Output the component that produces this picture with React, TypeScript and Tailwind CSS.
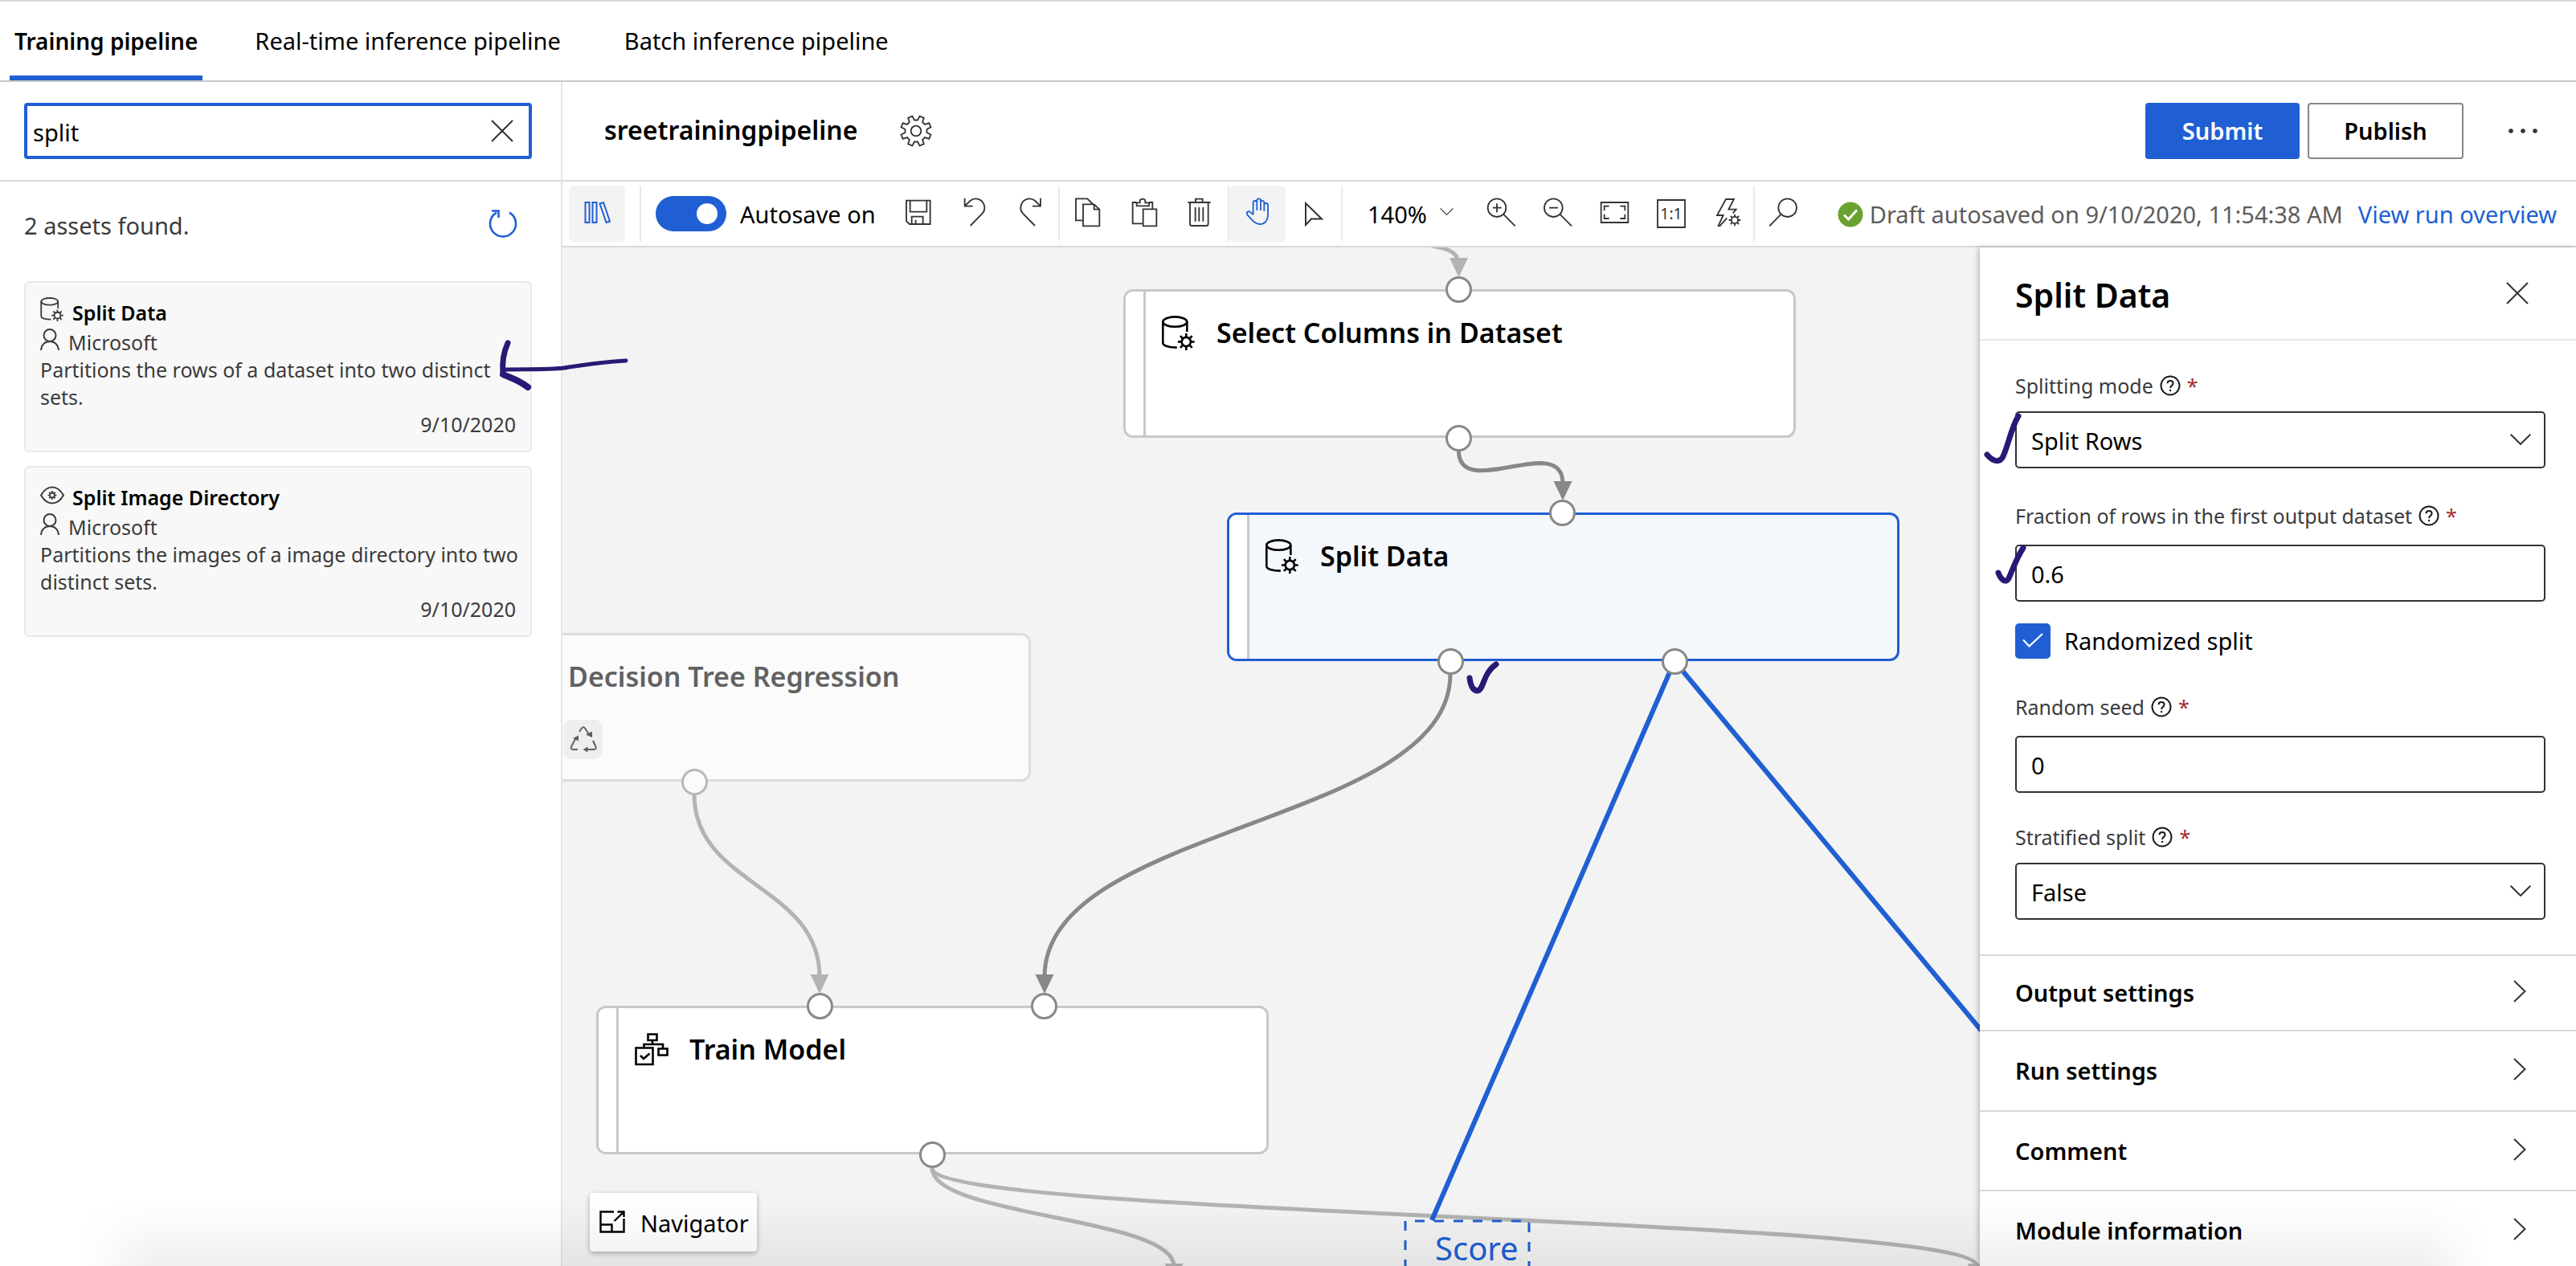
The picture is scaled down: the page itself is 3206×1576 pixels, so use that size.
import React, { useState } from "react";

const INK = "#281a74";
const BLUE = "#205fd3";

function gearPath(cx: number, cy: number, inner: number, outer: number) {
  const pts: string[] = [];
  for (let k = 0; k < 8; k++) {
    const steps: [number, number][] = [
      [8.5, inner],
      [14, outer],
      [31, outer],
      [36.5, inner],
    ];
    for (const [deg, r] of steps) {
      const a = ((k * 45 + deg) * Math.PI) / 180;
      pts.push(`${(cx + r * Math.sin(a)).toFixed(1)} ${(cy - r * Math.cos(a)).toFixed(1)}`);
    }
  }
  return `M${pts.join("L")}Z`;
}

function spokes(cx: number, cy: number, from: number, to: number) {
  let d = "";
  for (let k = 0; k < 8; k++) {
    const a = (k * Math.PI) / 4;
    d += `M${(cx + from * Math.cos(a)).toFixed(1)} ${(cy + from * Math.sin(a)).toFixed(1)}L${(cx + to * Math.cos(a)).toFixed(1)} ${(cy + to * Math.sin(a)).toFixed(1)}`;
  }
  return d;
}

function Ico({ vb, children, className = "" }: { vb: string; children: React.ReactNode; className?: string }) {
  return (
    <svg aria-hidden="true" viewBox={vb} width="44" height="44" fill="none" stroke="currentColor" strokeWidth="5.5" className={className}>
      {children}
    </svg>
  );
}

function ToolButton({ label, active, children }: { label: string; active?: boolean; children: React.ReactNode }) {
  return (
    <button
      aria-label={label}
      className={
        active
          ? "flex h-[70px] w-[70px] shrink-0 items-start justify-center rounded-md bg-[#f3f3f3] pt-[14px] text-[#205fd3]"
          : "flex h-[70px] w-[70px] shrink-0 items-start justify-center pt-[14px] text-[#333333]"
      }
    >
      {children}
    </button>
  );
}

function Separator() {
  return <div className="-ml-px h-[70px] w-0.5 shrink-0 rounded-r bg-[#e9e9e9]" />;
}

function DatabaseGear({ className }: { className: string }) {
  return (
    <svg aria-hidden="true" viewBox="0 0 42 43" fill="none" stroke="currentColor" strokeWidth="2.6" className={className}>
      <ellipse cx="16.3" cy="7.6" rx="15" ry="6.2" />
      <path d="M1.3 7.6V34c0 3.200 7 5.600 17.500 5.600M31.300 7.600V20" />
      <circle cx="30.300" cy="32.500" r="5.600" />
      <path d={spokes(30.3, 32.5, 6, 10.4)} />
    </svg>
  );
}

function EyeGear({ className }: { className: string }) {
  return (
    <svg aria-hidden="true" viewBox="0 0 30 30" fill="none" stroke="currentColor" strokeWidth="2" className={className}>
      <path d="M1 16.500C5 9.500 9.500 6.500 15 6.500s10 3 14 10c-4 7-8.500 10-14 10s-10-3-14-10Z" />
      <circle cx="15" cy="16.500" r="3" strokeWidth="1.800" />
      <path d={spokes(15, 16.5, 3.2, 5.4)} strokeWidth="1.600" />
    </svg>
  );
}

function PersonIcon() {
  return (
    <svg aria-hidden="true" viewBox="0 0 24 27" fill="none" stroke="currentColor" strokeWidth="2" className="h-[27px] w-6">
      <ellipse cx="12" cy="8.500" rx="7.500" ry="7.500" />
      <path d="M1 27C1.500 20 6 16 12 16s10.500 4 11 11" />
    </svg>
  );
}

function ChevronDown({ className, width = "2" }: { className: string; width?: string }) {
  return (
    <svg aria-hidden="true" viewBox="0 0 26 14" fill="none" stroke="#333333" strokeWidth={width} className={className}>
      <path d="M0.700 0.700L13 13L25.300 0.700" />
    </svg>
  );
}

function CloseIcon({ className }: { className: string }) {
  return (
    <svg aria-hidden="true" viewBox="0 0 28 28" fill="none" stroke="#333333" strokeWidth="2" className={className}>
      <path d="M1 1L27 27M27 1L1 27" />
    </svg>
  );
}

function Ink({ vb, className, children }: { vb: string; className: string; children: React.ReactNode }) {
  return (
    <svg aria-hidden="true" viewBox={vb} fill="none" stroke={INK} strokeWidth="7" strokeLinecap="round" strokeLinejoin="round" className={className}>
      {children}
    </svg>
  );
}

function AssetCard({ title, text, icon, children }: { title: string; text: string; icon: React.ReactNode; children?: React.ReactNode }) {
  return (
    <article className="relative rounded-md border-2 border-[#e9e9e9] bg-[#f8f8f8] px-[18px] pt-[18px] pb-4 text-[25px] leading-[34px] text-[#3b3b3b]">
      <div className="flex h-[39px] items-start gap-2.5">
        {icon}
        <h3 className="mt-0.5 font-semibold text-black">{title}</h3>
      </div>
      <div className="flex h-[34px] items-start gap-[11px]">
        <PersonIcon />
        <span>Microsoft</span>
      </div>
      <p className="-mr-3">{text}</p>
      <p className="text-right">9/10/2020</p>
      {children}
    </article>
  );
}

function Port({ className, faded }: { className: string; faded?: boolean }) {
  return (
    <span
      className={
        (faded ? "border-[#b8b8b7] bg-[#fbfbfb] " : "border-[#8a8886] bg-white ") +
        "absolute h-[33px] w-[33px] rounded-full border-[3px] " +
        className
      }
    />
  );
}

function GraphNode({ title, selected, className, icon, children }: { title: string; selected?: boolean; className: string; icon: React.ReactNode; children: React.ReactNode }) {
  return (
    <div
      className={
        (selected ? "border-[#205fd3] bg-[#f4f7fc] " : "border-[#c8c8c8] bg-white ") +
        "absolute flex h-[185px] w-[837px] rounded-[12px] border-[3px] " +
        className
      }
    >
      <div className="w-[25px] shrink-0 rounded-l-[9px] border-r-[3px] border-[#c8c8c8] bg-white" />
      <div className="mt-[31px] ml-[20px] flex h-10 items-center gap-[26px]">
        {icon}
        <h3 className="text-[34px] leading-10 font-semibold text-black">{title}</h3>
      </div>
      {children}
    </div>
  );
}

function FieldLabel({ htmlFor, children }: { htmlFor: string; children: React.ReactNode }) {
  return (
    <div className="flex items-center gap-2 text-[25px] leading-[34px] text-[#3b3b3b]">
      <label htmlFor={htmlFor}>{children}</label>
      <svg aria-hidden="true" viewBox="0 0 26 26" fill="none" stroke="#1b1b1b" strokeWidth="2" className="h-[26px] w-[26px]">
        <circle cx="13" cy="13" r="11.500" />
        <path d="M9.500 10.200C9.500 5.800 16.600 5.800 16.600 10.200C16.600 12.800 13.100 13 13.100 16" />
        <path d="M13.100 17.800V20.200" />
      </svg>
      <span className="text-[#a4262c]">*</span>
    </div>
  );
}

function SelectField({ id, value, options, children }: { id: string; value: string; options: string[]; children?: React.ReactNode }) {
  return (
    <div className="relative mt-[15px]">
      <select id={id} defaultValue={value} className="block h-[71px] w-full appearance-none rounded-[5px] border-2 border-[#333333] bg-white px-[18px] pt-0.5 text-[29px] text-black">
        {options.map((o) => (
          <option key={o}>{o}</option>
        ))}
      </select>
      <ChevronDown className="pointer-events-none absolute top-[28px] right-[18px] h-3.5 w-[26px]" />
      {children}
    </div>
  );
}

function TextField({ id, value, children }: { id: string; value: string; children?: React.ReactNode }) {
  return (
    <div className="relative mt-[19px]">
      <input id={id} defaultValue={value} className="block h-[71px] w-full rounded-[5px] border-2 border-[#333333] bg-white px-[18px] pt-0.5 text-[29px] text-black" />
      {children}
    </div>
  );
}

function Section({ title, className }: { title: string; className: string }) {
  return (
    <button className={"flex w-full shrink-0 items-center justify-between border-t-2 border-[#d9d9d9] pr-[62px] pl-11 text-left text-[29px] font-semibold text-black " + className}>
      {title}
      <svg aria-hidden="true" viewBox="0 0 16 28" fill="none" stroke="#333333" strokeWidth="2" className="mb-1 h-7 w-4">
        <path d="M1 1L14.500 14L1 27" />
      </svg>
    </button>
  );
}

function Edges() {
  return (
    <svg aria-hidden="true" className="absolute top-0 left-0" width="1764" height="1268" viewBox="700 308 1764 1268" fill="none" strokeWidth="5">
      <g stroke="#b3b3b1">
        <path d="M1770 304C1795 308 1815 310 1815.500 330" />
        <path d="M864 989C864 1102 1020 1102 1020 1216" />
        <path d="M1160 1454C1160 1515 1461 1515 1461 1576" />
        <path d="M1160 1454C1160 1515 2460 1515 2460 1576" />
      </g>
      <g stroke="#8a8886">
        <path d="M1815.500 561C1815.500 625 1945 537 1945 602" />
        <path d="M1805 839C1805 1027 1300 1027 1300 1216" />
      </g>
      <g fill="#b3b3b1">
        <path d="M1804 321H1827L1815.500 345Z" />
        <path d="M1008.500 1213H1031.500L1020 1237Z" />
        <path d="M1449.500 1573H1472.500L1461 1597Z" />
        <path d="M2448.500 1573H2471.500L2460 1597Z" />
      </g>
      <g fill="#8a8886">
        <path d="M1933.500 599H1956.500L1945 623Z" />
        <path d="M1288.500 1213H1311.500L1300 1237Z" />
      </g>
      <path d="M2084 823L1782 1519M2084 823L2466 1283" stroke={BLUE} strokeWidth="6" />
      <path d="M1749 1580V1520H1903V1580" stroke={BLUE} strokeWidth="3" strokeDasharray="12 12" />
    </svg>
  );
}

function Canvas() {
  return (
    <section aria-label="Pipeline canvas" className="relative flex-1 overflow-hidden bg-[#f3f3f3]">
      <Edges />
      <GraphNode title="Select Columns in Dataset" className="top-[52px] left-[698px]" icon={<DatabaseGear className="h-[43px] w-[42px]" />}>
        <Port className="-top-[19px] left-[398px]" />
        <Port className="top-[166px] left-[398px]" />
      </GraphNode>
      <GraphNode title="Split Data" selected className="top-[330px] left-[827px]" icon={<DatabaseGear className="h-[43px] w-[42px]" />}>
        <Port className="-top-[19px] left-[398px]" />
        <Port className="top-[166px] left-[259px]" />
        <Port className="top-[166px] left-[538px]" />
      </GraphNode>

      <div className="absolute top-[480px] -left-[254px] h-[185px] w-[837px] rounded-[12px] border-[3px] border-[#dcdcdb] bg-[#fbfbfb] pl-[258px]">
        <h3 className="mt-[31px] text-[34px] leading-10 font-semibold text-[#626262]">Decision Tree Regression</h3>
        <span className="absolute top-[105px] left-[252px] flex h-[49px] w-[49px] items-center justify-center rounded-[10px] bg-[#eeeeee]">
          <svg aria-hidden="true" viewBox="0 2 34 34" fill="none" stroke="#5f5f5f" strokeWidth="2" className="h-[34px] w-[34px]">
            <path d="M12 9L15 4.500Q17 2 19 4.500L24 12M29 20L32.500 27.500Q33 31 30.500 31H21M10 31H4Q1 31 2 27.500L8 16" />
            <path d="M28 8.500V16L20 12.500ZM22.500 27.500V34.500L16.500 31ZM4 17L11 13.500V20.500Z" fill="#5f5f5f" stroke="none" />
          </svg>
        </span>
        <Port faded className="top-[166px] left-[399px]" />
      </div>

      <GraphNode
        title="Train Model"
        className="top-[944px] left-[42px]"
        icon={
          <svg aria-hidden="true" viewBox="0 0 42 42" fill="none" stroke="currentColor" strokeWidth="2.600" className="h-[42px] w-[42px]">
            <path d="M1.500 19.500H22.500V40H1.500ZM7 29L11 33L18.500 26.500M16.500 2.500H27.500V10H16.500ZM22 10V15M11.500 19V15H35V20M29.500 20.500H40.500V28.500H29.500Z" />
          </svg>
        }
      >
        <Port className="-top-[19px] left-[259px]" />
        <Port className="-top-[19px] left-[538px]" />
        <Port className="top-[166px] left-[399px]" />
      </GraphNode>

      <span className="absolute top-[1219px] left-[1086px] text-[40px] leading-[54px] text-[#205fd3]">Score</span>

      <Ink vb="1822 820 48 46" className="absolute top-[512px] left-[1122px] h-[46px] w-12">
        <path d="M1829 844C1830 852 1833 859 1838 860C1847 860 1845 838 1862 827" />
      </Ink>

      <button className="absolute top-[1177px] left-[34px] flex h-[73px] items-center gap-[19px] rounded-[4px] bg-white pt-0.5 pr-2.5 pl-3 text-[29px] text-black shadow-[0_2px_6px_rgba(0,0,0,0.3)]">
        <svg aria-hidden="true" viewBox="0 0 32 28" fill="none" stroke="currentColor" strokeWidth="2.400" className="mb-1 h-7 w-8">
          <path d="M18 1.500H1.500V26.500H30.500V10M1.500 17.500H15.500V26.500M18.500 13L30 2M22.500 1.500H30.500V8" />
        </svg>
        Navigator
      </button>
    </section>
  );
}

export default function App() {
  const [autosave, setAutosave] = useState(true);
  return (
    <div className="relative flex h-screen flex-col overflow-hidden border-t-2 border-[#d9d9d9] bg-white font-['Noto_Sans',sans-serif] text-[29px] leading-[40px] text-black">
      <nav className="flex h-[100px] shrink-0 items-stretch border-b-2 border-[#c8c8c8] pl-3">
        <a href="#training" className="mr-[61px] flex items-center border-b-[6px] border-[#205fd3] px-1.5 pt-1.5 text-[28px] font-semibold">
          Training pipeline
        </a>
        <a href="#realtime" className="mr-[79px] flex items-center pl-1">
          Real-time inference pipeline
        </a>
        <a href="#batch" className="flex items-center">
          Batch inference pipeline
        </a>
      </nav>

      <div className="flex min-h-0 flex-1">
        <aside className="relative z-10 w-[700px] shrink-0 border-r-2 border-[#e6e6e6] bg-white">
          <div className="flex h-[124px] items-center border-b-2 border-[#d9d9d9] pr-9 pl-[30px]">
            <div className="relative flex-1">
              <input aria-label="Search assets" defaultValue="split" className="block h-[70px] w-full rounded-[4px] border-4 border-[#205fd3] bg-white px-[7px] pt-0.5 text-[29px]" />
              <button aria-label="Clear search" className="absolute top-[21px] right-[23px]">
                <CloseIcon className="h-7 w-7" />
              </button>
            </div>
          </div>
          <div className="flex h-[106px] items-center justify-between pr-[54px] pl-[30px] text-[#3b3b3b]">
            <p className="pt-1">2 assets found.</p>
            <button aria-label="Refresh" className="text-[#205fd3]">
              <svg aria-hidden="true" viewBox="0 0 36 38" fill="none" stroke="currentColor" strokeWidth="2.600" className="h-[38px] w-9">
                <path d="M26 4.600A16 16 0 1 1 10 4.600M4 2.500H12.500V11" />
              </svg>
            </button>
          </div>
          <div className="flex flex-col gap-[17px] pt-[18px] pr-9 pl-[30px]">
            <AssetCard title="Split Data" text="Partitions the rows of a dataset into two distinct sets." icon={<DatabaseGear className="h-[30px] w-[30px]" />}>
              <Ink vb="620 415 170 75" className="pointer-events-none absolute top-[63px] left-[588px] h-[75px] w-[170px]">
                <path d="M632 427C626 440 625 455 626 466" />
                <path d="M626 466C634 470 644 472 657 482" strokeWidth="8" />
                <path d="M628 460C660 459 690 461 708 457C735 453 760 450 779 449" strokeWidth="5" />
              </Ink>
            </AssetCard>
            <AssetCard title="Split Image Directory" text="Partitions the images of a image directory into two distinct sets." icon={<EyeGear className="h-[30px] w-[30px]" />} />
          </div>
        </aside>

        <main className="flex min-w-0 flex-1 flex-col">
          <header className="flex h-[124px] shrink-0 items-center border-b-2 border-[#d9d9d9] pr-[46px] pl-[52px]">
            <h1 className="pb-0.5 text-[32px] font-semibold">sreetrainingpipeline</h1>
            <button aria-label="Pipeline settings" className="ml-[50px] text-[#333333]">
              <svg aria-hidden="true" viewBox="0 0 132 132" width="44" height="44" fill="none" stroke="currentColor" strokeWidth="5.500">
                <path d={gearPath(66, 66, 41, 57)} />
                <circle cx="66" cy="66" r="19" />
              </svg>
            </button>
            <div className="ml-auto flex items-center">
              <button className="h-[70px] w-48 rounded-[4px] bg-[#205fd3] font-semibold text-white">Submit</button>
              <button className="ml-2.5 h-[70px] w-[194px] rounded-[4px] border-2 border-[#8a8886] bg-white font-semibold">Publish</button>
              <button aria-label="More actions" className="ml-[54px]">
                <svg aria-hidden="true" viewBox="0 0 40 8" className="h-2 w-10" fill="#333333">
                  <circle cx="5" cy="4" r="2.800" />
                  <circle cx="20" cy="4" r="2.800" />
                  <circle cx="35" cy="4" r="2.800" />
                </svg>
              </button>
            </div>
          </header>

          <div role="toolbar" aria-label="Canvas tools" className="flex h-[82px] shrink-0 items-center border-b-2 border-[#d9d9d9] pr-6 pl-2">
            <ToolButton label="Asset library" active>
              <Ico vb="721 245 44 44" className="[stroke-width:2]">
                <path d="M728.500 252H733.500V277H728.500ZM737.500 252H742.500V277H737.500ZM746.500 253.500L751 252L759 275.500L754.500 277Z" />
              </Ico>
            </ToolButton>
            <div className="mx-[18px] h-[70px] w-0.5 shrink-0 bg-[#e9e9e9]" />
            <button
              role="switch"
              id="autosave"
              aria-checked={autosave}
              aria-label="Autosave"
              onClick={() => setAutosave(!autosave)}
              className="flex h-11 w-[88px] shrink-0 items-center justify-end rounded-full bg-[#205fd3] pr-[11px]"
            >
              <span className="h-[26px] w-[26px] rounded-full bg-white" />
            </button>
            <label htmlFor="autosave" className="ml-[17px] w-[187px] shrink-0 pt-0.5 whitespace-nowrap">
              Autosave on
            </label>

            <ToolButton label="Save">
              <Ico vb="63 345 132 132">
                <path d="M84 359H173V447H96L84 436ZM98 361V401H160V361M104 447V419H146V447M119 431V447" />
              </Ico>
            </ToolButton>
            <ToolButton label="Undo">
              <Ico vb="273 345 132 132">
                <path d="M302 350V380H332M303 379L322 360C338 347 362 351 372 370C380 386 376 398 368 407L323 453" />
              </Ico>
            </ToolButton>
            <ToolButton label="Redo">
              <Ico vb="483 345 132 132">
                <path d="M585 350V380H555M584 379L565 360C549 347 525 351 515 370C507 386 511 398 519 407L564 453" />
              </Ico>
            </ToolButton>
            <Separator />
            <ToolButton label="Copy">
              <Ico vb="696 345 132 132">
                <path d="M745 433H717V352H760L780 372M744 373H785L805 392V454H744ZM785 373V392H805" />
              </Ico>
            </ToolButton>
            <ToolButton label="Paste">
              <Ico vb="906 345 132 132">
                <path d="M968 445H929V366H944M990 366H1003V391M968 391H1018V454H968ZM944 379V367H956V361A10 8 0 0 1 976 361V367H990V379Z" />
              </Ico>
            </ToolButton>
            <ToolButton label="Delete">
              <Ico vb="1116 345 132 132">
                <path d="M1135 366H1220M1164 366V353H1190V366M1143 366V446Q1143 453 1150 453H1204Q1211 453 1211 446V366M1163 384V437M1177 384V437M1192 384V437" />
              </Ico>
            </ToolButton>
            <Separator />
            <ToolButton label="Pan" active>
              <Ico vb="1329 345 132 132">
                <path d="M1379 412V367A7 7 0 0 1 1393 367V396M1393 367V359A7 7 0 0 1 1407 359V396M1407 364A7 7 0 0 1 1420 364V398M1420 376A7 7 0 0 1 1434 376V412C1434 435 1420 447 1404 447C1390 447 1383 440 1377 434L1357 412C1352 404 1359 397 1367 401L1379 412" />
              </Ico>
            </ToolButton>
            <ToolButton label="Select">
              <Ico vb="1613 245 44 44" className="[stroke-width:2]">
                <path d="M1625 253V280L1632 272.500H1645Z" />
              </Ico>
            </ToolButton>
            <Separator />

            <div className="relative w-[162px] shrink-0">
              <select aria-label="Zoom level" defaultValue="140%" className="block h-[70px] w-full appearance-none bg-transparent pt-0.5 pl-[31px] text-[29px]">
                <option>140%</option>
                <option>100%</option>
              </select>
              <ChevronDown className="pointer-events-none absolute top-[28px] right-6 h-[9px] w-[17px]" width="1.800" />
            </div>

            <ToolButton label="Zoom in">
              <Ico vb="168 57 132 132">
                <circle cx="219" cy="98" r="34" />
                <path d="M243 122L287 166M219 82V115M203 98H236" />
              </Ico>
            </ToolButton>
            <ToolButton label="Zoom out">
              <Ico vb="378 57 132 132">
                <circle cx="430" cy="98" r="34" />
                <path d="M454 122L498 166M414 98H447" />
              </Ico>
            </ToolButton>
            <ToolButton label="Fit to screen">
              <Ico vb="588 57 132 132">
                <path d="M608 78H709V153H608ZM620 109V92H638M679 92H697V109M620 122V138H638M679 138H697V122" />
              </Ico>
            </ToolButton>
            <ToolButton label="Actual size">
              <Ico vb="798 57 132 132">
                <path d="M819 69H921V171H819Z" />
                <text x="870" y="141" textAnchor="middle" fontSize="58" fill="currentColor" stroke="none">
                  1:1
                </text>
              </Ico>
            </ToolButton>
            <ToolButton label="Auto layout">
              <Ico vb="1008 57 132 132">
                <path d="M1078 136L1052 165H1046L1064 126H1041L1074 66H1104L1084 104H1112L1100 118" />
                <circle cx="1107" cy="144" r="12.500" />
                <path d={spokes(1107, 144, 13, 22)} />
              </Ico>
            </ToolButton>
            <Separator />
            <ToolButton label="Search canvas">
              <Ico vb="1224 57 132 132">
                <circle cx="1307" cy="98" r="34" />
                <path d="M1283 122L1240 166" />
              </Ico>
            </ToolButton>

            <div className="ml-auto flex items-center pt-0.5 whitespace-nowrap">
              <svg aria-hidden="true" viewBox="0 0 32 32" className="h-8 w-8">
                <circle cx="16" cy="16" r="15.500" fill="#6ba12f" />
                <path d="M8 16.500L13.500 22L24 10.500" fill="none" stroke="#fff" strokeWidth="3" />
              </svg>
              <span className="ml-2 text-[#5c5c5c]">Draft autosaved on 9/10/2020, 11:54:38 AM</span>
              <a href="#run-overview" className="ml-[19px] text-[#205fd3]">
                View run overview
              </a>
            </div>
          </div>

          <div className="flex min-h-0 flex-1">
            <Canvas />
            <aside className="relative flex w-[742px] shrink-0 flex-col bg-white shadow-[-2px_0_6px_rgba(0,0,0,0.25)]">
              <div className="flex h-[116px] shrink-0 items-center justify-between border-b-2 border-[#e9e9e9] pr-[59px] pl-11">
                <h2 className="pt-1 text-[41px] leading-[56px] font-semibold">Split Data</h2>
                <button aria-label="Close panel">
                  <CloseIcon className="h-7 w-7" />
                </button>
              </div>
              <form className="h-[764px] shrink-0 pt-[39px] pr-[38px] pl-11">
                <FieldLabel htmlFor="mode">Splitting mode</FieldLabel>
                <SelectField id="mode" value="Split Rows" options={["Split Rows", "Regular Expression", "Relative Expression"]}>
                  <Ink vb="2468 508 52 72" className="pointer-events-none absolute -top-1 -left-10 h-[72px] w-[52px]">
                    <path d="M2473 566C2479 573 2487 577 2492 570C2498 560 2503 532 2512 518" />
                  </Ink>
                </SelectField>
                <div className="mt-[42px]">
                  <FieldLabel htmlFor="fraction">Fraction of rows in the first output dataset</FieldLabel>
                  <TextField id="fraction" value="0.6">
                    <Ink vb="2480 674 46 58" className="pointer-events-none absolute -top-1 -left-7 h-[58px] w-[46px]">
                      <path d="M2487 713C2490 721 2496 727 2500 720C2505 709 2509 696 2518 682" />
                    </Ink>
                  </TextField>
                </div>
                <label className="relative mt-[27px] flex h-11 items-center gap-[17px]">
                  <input type="checkbox" defaultChecked className="h-11 w-11 appearance-none rounded-[5px] bg-[#205fd3]" />
                  <svg aria-hidden="true" viewBox="0 0 26 18" fill="none" stroke="#fff" strokeWidth="2.200" className="pointer-events-none absolute top-[12px] left-[9px] h-[18px] w-[26px]">
                    <path d="M1 8.500L8.500 16.500L25 1" />
                  </svg>
                  Randomized split
                </label>
                <div className="mt-[43px]">
                  <FieldLabel htmlFor="seed">Random seed</FieldLabel>
                  <TextField id="seed" value="0" />
                </div>
                <div className="mt-[38px]">
                  <FieldLabel htmlFor="stratified">Stratified split</FieldLabel>
                  <SelectField id="stratified" value="False" options={["False", "True"]} />
                </div>
              </form>
              <Section title="Output settings" className="h-[94px]" />
              <Section title="Run settings" className="h-[100px]" />
              <Section title="Comment" className="h-[99px]" />
              <Section title="Module information" className="h-[100px]" />
            </aside>
          </div>
        </main>
      </div>

      <div className="pointer-events-none absolute inset-x-0 bottom-0 z-20 h-20 bg-linear-to-b from-transparent to-black/6 [mask-image:linear-gradient(to_right,transparent_100px,black_190px,black_calc(100%-190px),transparent_calc(100%-110px))]" />
    </div>
  );
}
